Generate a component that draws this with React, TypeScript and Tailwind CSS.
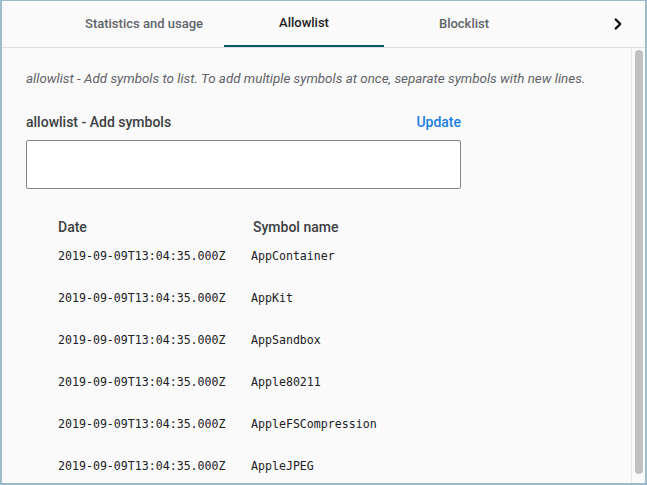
import { ChevronRight } from 'lucide-react';

const rows = [
  { date: '2019-09-09T13:04:35.000Z', name: 'AppContainer' },
  { date: '2019-09-09T13:04:35.000Z', name: 'AppKit' },
  { date: '2019-09-09T13:04:35.000Z', name: 'AppSandbox' },
  { date: '2019-09-09T13:04:35.000Z', name: 'Apple80211' },
  { date: '2019-09-09T13:04:35.000Z', name: 'AppleFSCompression' },
  { date: '2019-09-09T13:04:35.000Z', name: 'AppleJPEG' },
];

const tabs = ['Statistics and usage', 'Allowlist', 'Blocklist'];

const App = () => {
  return (
    <div
      className="w-[647px] h-[485px] bg-[#fafafa] border-t border-l-2 border-r-2 border-b-2 border-[#9dbccb] flex flex-col overflow-hidden"
      style={{ fontFamily: 'Roboto, "Noto Sans", sans-serif' }}
    >
      {/* tab header */}
      <div className="h-[47px] shrink-0 flex border-b border-[#e0e0e0]">
        <div className="w-[62px]" />
        {tabs.map((t) => {
          const active = t === 'Allowlist';
          return (
            <div
              key={t}
              className={
                active
                  ? 'w-[160px] h-full flex items-center justify-center text-[13px] font-medium text-[#202124] border-b-2 border-[#005f66]'
                  : 'w-[160px] h-full flex items-center justify-center text-[13px] font-medium text-[#5f6368]'
              }
            >
              {t}
            </div>
          );
        })}
        <div className="flex-1" />
        <div className="w-[32px] h-full flex items-center justify-center mr-[11px]">
          <ChevronRight size={18} strokeWidth={3} className="text-black" />
        </div>
      </div>

      <div className="flex flex-1 min-h-0">
        {/* content */}
        <div className="flex-1 overflow-hidden px-[24px] pt-[23px]">
          <p className="text-[13.4px] leading-[16px] italic text-[#5f6368] whitespace-nowrap">
            allowlist - Add symbols to list. To add multiple symbols at once, separate symbols with new lines.
          </p>

          <div className="w-[435px] mt-[25px] flex items-center justify-between">
            <span className="text-[14px] leading-[20px] font-medium text-[#3c4043]">allowlist - Add symbols</span>
            <button className="text-[14px] leading-[20px] font-medium text-[#1a7fe8]">Update</button>
          </div>

          <textarea className="mt-[8px] block w-[435px] h-[49px] bg-white border border-[#858585] rounded-[2px] resize-none outline-none" />

          <div className="ml-[32px] mt-[28px]">
            <div className="flex h-[20px] items-center text-[14px] font-medium text-[#3c4043]">
              <div className="w-[193px]">Date</div>
              <div className="pl-[2px]">Symbol name</div>
            </div>
            <div className="mt-[12px] flex flex-col gap-[26px]">
              {rows.map((r, i) => (
                <div
                  key={i}
                  className="flex h-[16px] items-center text-[11.6px] text-[#202124]"
                  style={{ fontFamily: '"DejaVu Sans Mono", "Liberation Mono", monospace' }}
                >
                  <div className="w-[193px]">{r.date}</div>
                  <div>{r.name}</div>
                </div>
              ))}
            </div>
          </div>
        </div>

        {/* scrollbar */}
        <div className="w-[14px] shrink-0 border-l border-[#e8e8e8] pl-[3px] pt-[2px] pb-[9px]">
          <div className="w-[8px] h-full rounded-full bg-[#c1c1c1]" />
        </div>
      </div>
    </div>
  );
};

export default App;
